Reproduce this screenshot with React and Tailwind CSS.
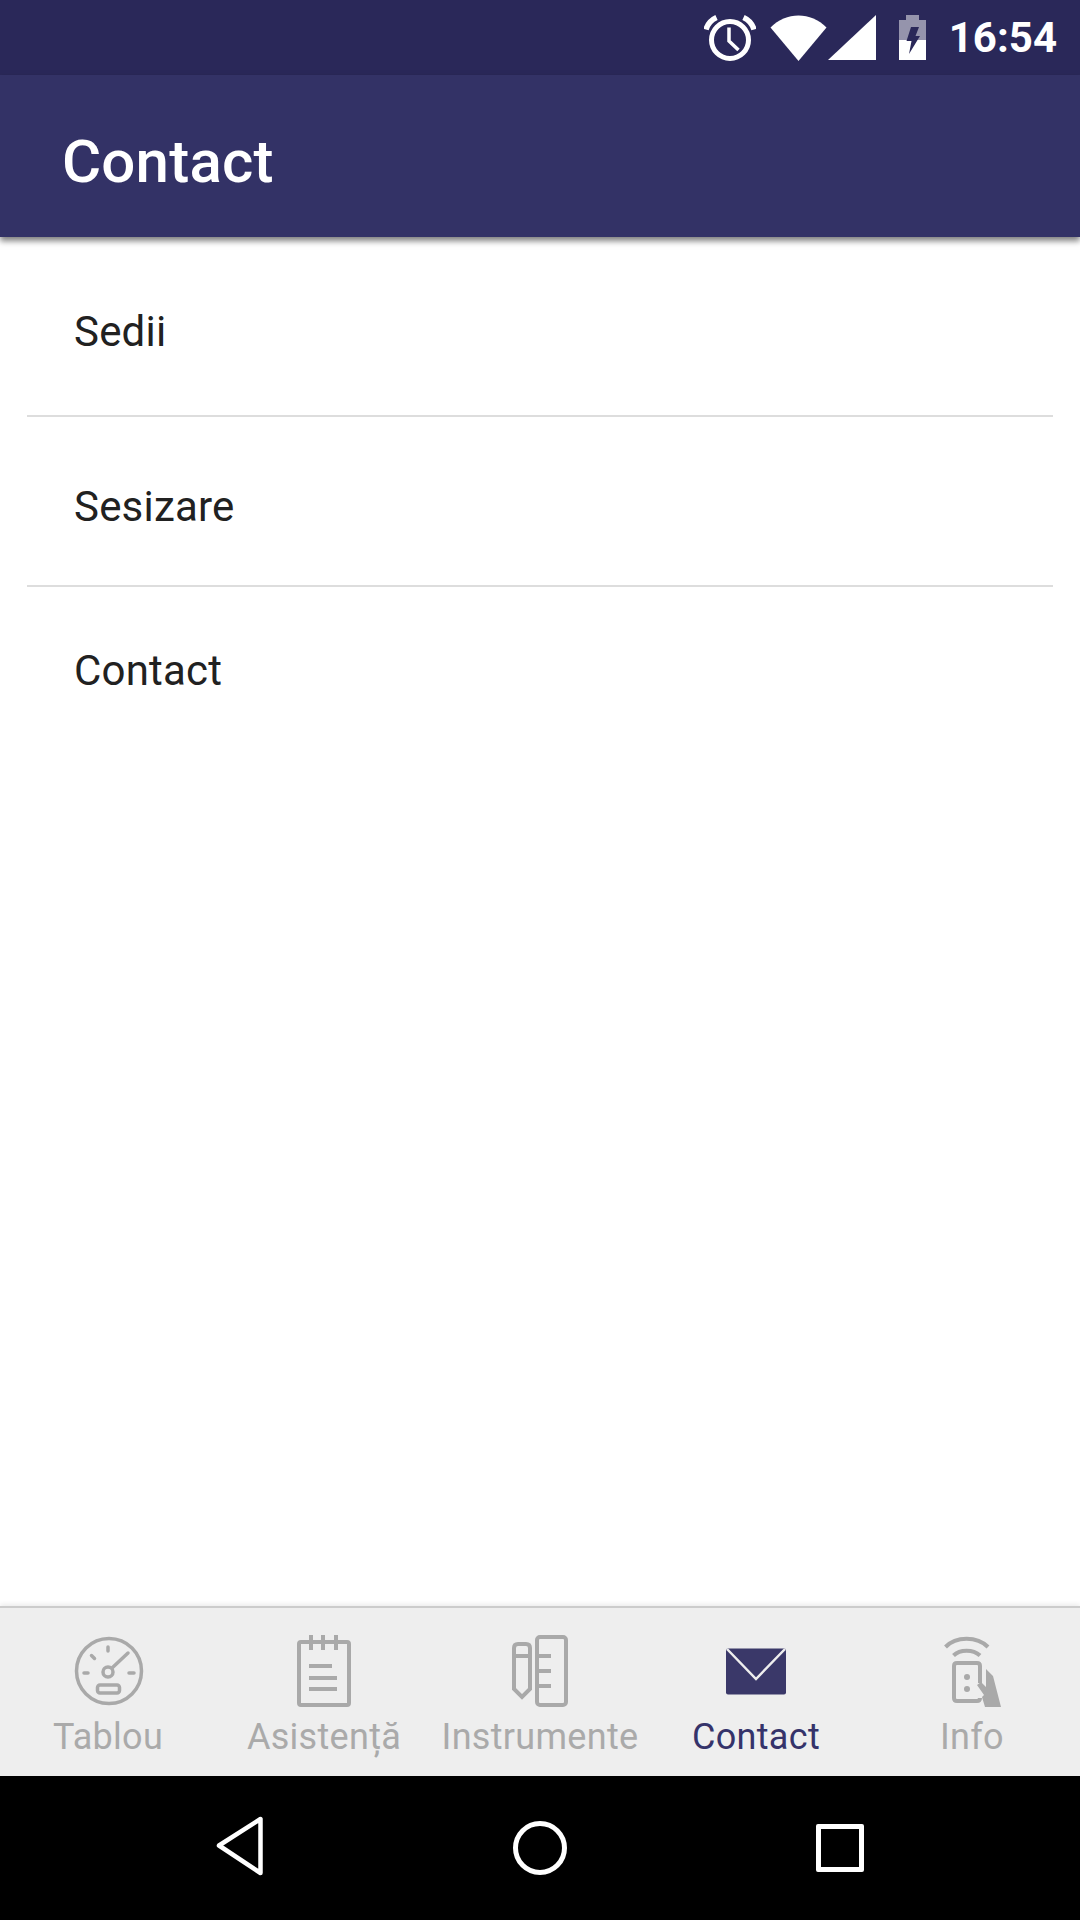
const GREY = "#a9a9a9"

function AlarmIcon() {
  return (
    <svg width="52" height="46" viewBox="0 0 52 46" fill="none" stroke="#fff">
      <circle cx="26" cy="25" r="18.5" strokeWidth="5" />
      <path d="M25 12.5V26l9.5 9" strokeWidth="3.5" />
      <path d="M2 14.5C3.5 9.5 7 5 12.5 2.5M50 14.5C48.5 9.5 45 5 39.5 2.5" strokeWidth="5.5" />
    </svg>
  )
}

function WifiIcon() {
  return (
    <svg width="57" height="46" viewBox="0 0 57 46">
      <path d="M0.5 12.5C16 -3.5 41 -3.5 56.5 12.5L28.5 46Z" fill="#fff" />
    </svg>
  )
}

function SignalIcon() {
  return (
    <svg width="48" height="46" viewBox="0 0 48 46">
      <path d="M48 0V45H0Z" fill="#fff" />
    </svg>
  )
}

function BatteryIcon() {
  return (
    <svg width="27" height="46" viewBox="0 0 27 46">
      <path d="M0 5H7V0H20V5H27V25H0Z" fill="#fff" fillOpacity="0.5" />
      <path d="M0 25H27V45H0Z" fill="#fff" />
      <path d="M12 12H20L16.5 21H21L10 39L12.5 26H7.5Z" fill="#2a2859" />
    </svg>
  )
}

function GaugeIcon() {
  return (
    <svg width="70" height="70" viewBox="0 0 70 70" fill="none" stroke={GREY} strokeWidth="3.5" strokeLinecap="round">
      <circle cx="35" cy="35" r="32.5" />
      <circle cx="34" cy="36" r="5" />
      <path d="M38 32L54 17M34 11V15M17.5 19.5L20.5 22.5M10 37H14M55 37H60" />
      <rect x="23.5" y="49" width="22" height="8" rx="2.5" />
    </svg>
  )
}

function NotepadIcon() {
  return (
    <svg width="56" height="72" viewBox="0 0 56 72" fill="none" stroke={GREY} strokeWidth="4">
      <rect x="3" y="7" width="50" height="63" rx="2" />
      <path d="M15 0V15M27 0V15M40 0V15" />
      <path d="M13 31H36M13 43H41M13 54H41" />
    </svg>
  )
}

function ToolsIcon() {
  return (
    <svg width="56" height="72" viewBox="0 0 56 72" fill="none" stroke={GREY} strokeWidth="4">
      <path d="M2 13C2 10 4 9 6 9H14C16 9 18 10 18 13V54L10 62L2 54Z" />
      <path d="M2 21H18" />
      <rect x="25" y="2" width="29" height="68" rx="3" />
      <path d="M25 21H39M25 36H39M25 51H39" />
    </svg>
  )
}

function EnvelopeIcon() {
  return (
    <svg width="60" height="47" viewBox="0 0 60 47">
      <rect width="60" height="46" y="0.5" rx="2" fill="#3a3869" />
      <path d="M1 1L30 31L59 1" fill="none" stroke="#eeeeee" strokeWidth="2.5" />
    </svg>
  )
}

function InfoIcon() {
  return (
    <svg width="60" height="72" viewBox="0 0 60 72" fill="none" stroke={GREY}>
      <path d="M1.5 12C12 1 33 1 44 12" strokeWidth="4" />
      <path d="M9.5 20.5C16 14 29 14 36 20.5" strokeWidth="4" />
      <path d="M36 48V31C36 29 35 28 33 28H13C11 28 10 29 10 31V63C10 65 11 66 13 66H33C35 66 36 65 36 63" strokeWidth="4" />
      <circle cx="23" cy="42" r="3" fill={GREY} stroke="none" />
      <circle cx="23" cy="54" r="3" fill={GREY} stroke="none" />
      <path d="M42 34L49 41L57 72H41L38 62L40 60L33 50L37 47L42 52Z" fill={GREY} stroke="none" />
    </svg>
  )
}

function NavTab({ icon, label, active }) {
  return (
    <div className="flex-1 flex flex-col items-center">
      <div className="h-[72px] flex items-center justify-center">{icon}</div>
      <span className={active ? "text-[36px] tracking-[0.3px] leading-[42px] mt-[9px] text-[#35336a]" : "text-[36px] tracking-[0.3px] leading-[42px] mt-[9px] text-[#aaaaaa]"}>
        {label}
      </span>
    </div>
  )
}

export default function App() {
  return (
    <div className="w-[1080px] h-[1920px] flex flex-col bg-white overflow-hidden font-['Roboto',sans-serif]">

      {/* Status bar */}
      <div className="h-[75px] bg-[#2a2859] flex items-center justify-end pr-[23px]">
        <AlarmIcon />
        <div className="ml-[14px]"><WifiIcon /></div>
        <div className="ml-[1px]"><SignalIcon /></div>
        <div className="ml-[23px]"><BatteryIcon /></div>
        <span className="ml-[23px] text-white text-[42px] font-bold">16:54</span>
      </div>

      {/* Toolbar */}
      <div className="relative h-[162px] bg-[#333266] flex items-center pl-[62px] pt-[12px] shadow-[0_4px_6px_rgba(0,0,0,0.5)]">
        <span className="text-white text-[60px] tracking-[0.2px] font-medium">Contact</span>
      </div>

      {/* List */}
      <div className="flex-1 mx-[27px]">
        <div className="h-[180px] border-b-2 border-[#dddddd] pl-[47px] pt-[70px] text-[42px] tracking-[0.2px] leading-[50px] text-[#212121]">Sedii</div>
        <div className="h-[170px] border-b-2 border-[#dddddd] pl-[47px] pt-[65px] text-[42px] tracking-[0.2px] leading-[50px] text-[#212121]">Sesizare</div>
        <div className="h-[170px] pl-[47px] pt-[59px] text-[42px] tracking-[0.2px] leading-[50px] text-[#212121]">Contact</div>
      </div>

      {/* Bottom tabs */}
      <div className="h-[170px] bg-[#eeeeee] border-t-2 border-[#cccccc] flex pt-[27px] shadow-[0_-2px_5px_rgba(0,0,0,0.08)]">
        <NavTab icon={<div className="ml-[2px]"><GaugeIcon /></div>} label="Tablou" />
        <NavTab icon={<NotepadIcon />} label="Asistență" />
        <NavTab icon={<ToolsIcon />} label="Instrumente" />
        <NavTab icon={<EnvelopeIcon />} label="Contact" active />
        <NavTab icon={<div className="ml-[4px]"><InfoIcon /></div>} label="Info" />
      </div>

      {/* Android nav bar */}
      <div className="h-[144px] bg-black flex items-center px-[90px]">
        <div className="flex-1 flex justify-center">
          <svg width="52" height="60" viewBox="0 0 52 60" fill="none" stroke="#fff" strokeWidth="4.5" strokeLinejoin="round" className="-mt-[5px]">
            <path d="M46.5 3V57L5 29.5Z" />
          </svg>
        </div>
        <div className="flex-1 flex justify-center">
          <div className="w-[54px] h-[54px] rounded-full border-[5px] border-white"></div>
        </div>
        <div className="flex-1 flex justify-center">
          <div className="w-[48px] h-[48px] rounded-[2px] border-[5px] border-white"></div>
        </div>
      </div>
    </div>
  )
}
